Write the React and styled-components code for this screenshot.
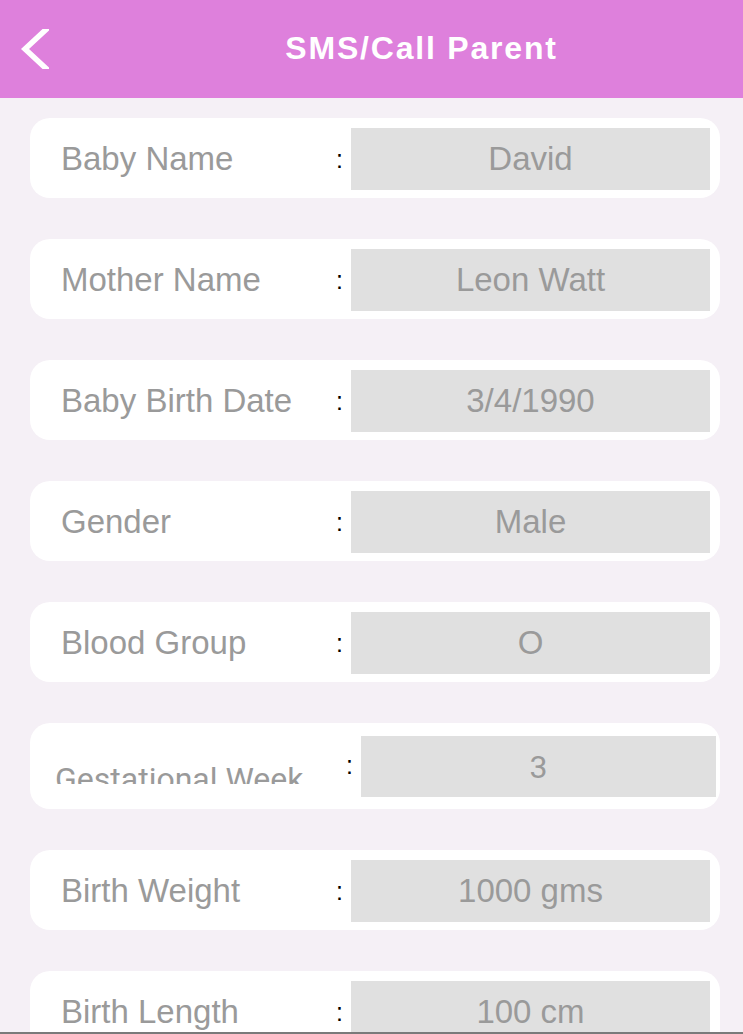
import styled, { createGlobalStyle } from "styled-components";

const GlobalStyle = createGlobalStyle`
  * { box-sizing: border-box; }
  html, body { margin: 0; padding: 0; }
  body {
    font-family: "Liberation Sans", Arial, sans-serif;
    background: #f5f0f6;
  }
`;

const rows = [
  { label: "Baby Name", value: "David" },
  { label: "Mother Name", value: "Leon Watt" },
  { label: "Baby Birth Date", value: "3/4/1990" },
  { label: "Gender", value: "Male" },
  { label: "Blood Group", value: "O" },
  { label: "Gestational Week", value: "3", android: true },
  { label: "Birth Weight", value: "1000 gms" },
  { label: "Birth Length", value: "100 cm" },
];

function BackChevron() {
  return (
    <svg width="28" height="40" viewBox="0 0 28 40">
      <polyline points="31,-5 4,20 31,45" fill="none" stroke="#fff" strokeWidth="5.5" />
    </svg>
  );
}

function App() {
  return (
    <Page>
      <GlobalStyle />
      <Header>
        <BackButton>
          <BackChevron />
        </BackButton>
        <Title>SMS/Call Parent</Title>
      </Header>
      <Content>
        {rows.map((row) => (
          <Card key={row.label} $android={row.android}>
            <Label $android={row.android}>{row.label}</Label>
            <Colon $android={row.android}>:</Colon>
            <ValueBox $android={row.android}>{row.value}</ValueBox>
          </Card>
        ))}
      </Content>
      <BottomEdge />
    </Page>
  );
}

export default App;

const Page = styled.div`
  height: 100vh;
  display: flex;
  flex-direction: column;
  overflow: hidden;
  background: #f5f0f6;
`;

const Header = styled.header`
  flex: 0 0 98px;
  display: flex;
  align-items: center;
  background: #de80dc;
`;

const BackButton = styled.div`
  width: 100px;
  height: 100%;
  display: flex;
  align-items: center;
  padding-left: 21px;
`;

const Title = styled.h1`
  flex: 1;
  margin: 0;
  text-align: center;
  color: #fff;
  font-size: 32px;
  font-weight: 700;
  letter-spacing: 1.8px;
  padding-bottom: 2px;
`;

const Content = styled.main`
  flex: 1;
  overflow: hidden;
  display: flex;
  flex-direction: column;
  gap: 41px;
  padding: 20px 23px 0 30px;
`;

const Card = styled.div`
  flex: 0 0 ${(p) => (p.$android ? "86px" : "80px")};
  display: flex;
  align-items: center;
  background: #fff;
  border-radius: 20px;
  padding: ${(p) => (p.$android ? "13px 4px 12px 25px" : "10px 10px 8px 31px")};
`;

const Label = styled.div`
  flex: 1;
  color: #9a9a9a;
  white-space: nowrap;
  font-family: ${(p) => (p.$android ? "Roboto, sans-serif" : `"Liberation Sans", Arial, sans-serif`)};
  font-size: ${(p) => (p.$android ? "32px" : "33px")};
  ${(p) =>
    p.$android &&
    `
    align-self: flex-start;
    margin-top: 24px;
    height: 24px;
    overflow: hidden;
  `}
`;

const Colon = styled.span`
  color: #000;
  font-size: 25px;
  margin-right: 8px;
  ${(p) => p.$android && "margin-bottom: 2px;"}
`;

const ValueBox = styled.div`
  width: ${(p) => (p.$android ? "355px" : "359px")};
  align-self: stretch;
  display: flex;
  align-items: center;
  justify-content: center;
  background: #e0e0e0;
  color: #9a9a9a;
  font-family: ${(p) => (p.$android ? "Roboto, sans-serif" : `"Liberation Sans", Arial, sans-serif`)};
  font-size: ${(p) => (p.$android ? "32px" : "33px")};
`;

const BottomEdge = styled.div`
  flex: 0 0 2px;
  background: #7a7a7a;
`;
